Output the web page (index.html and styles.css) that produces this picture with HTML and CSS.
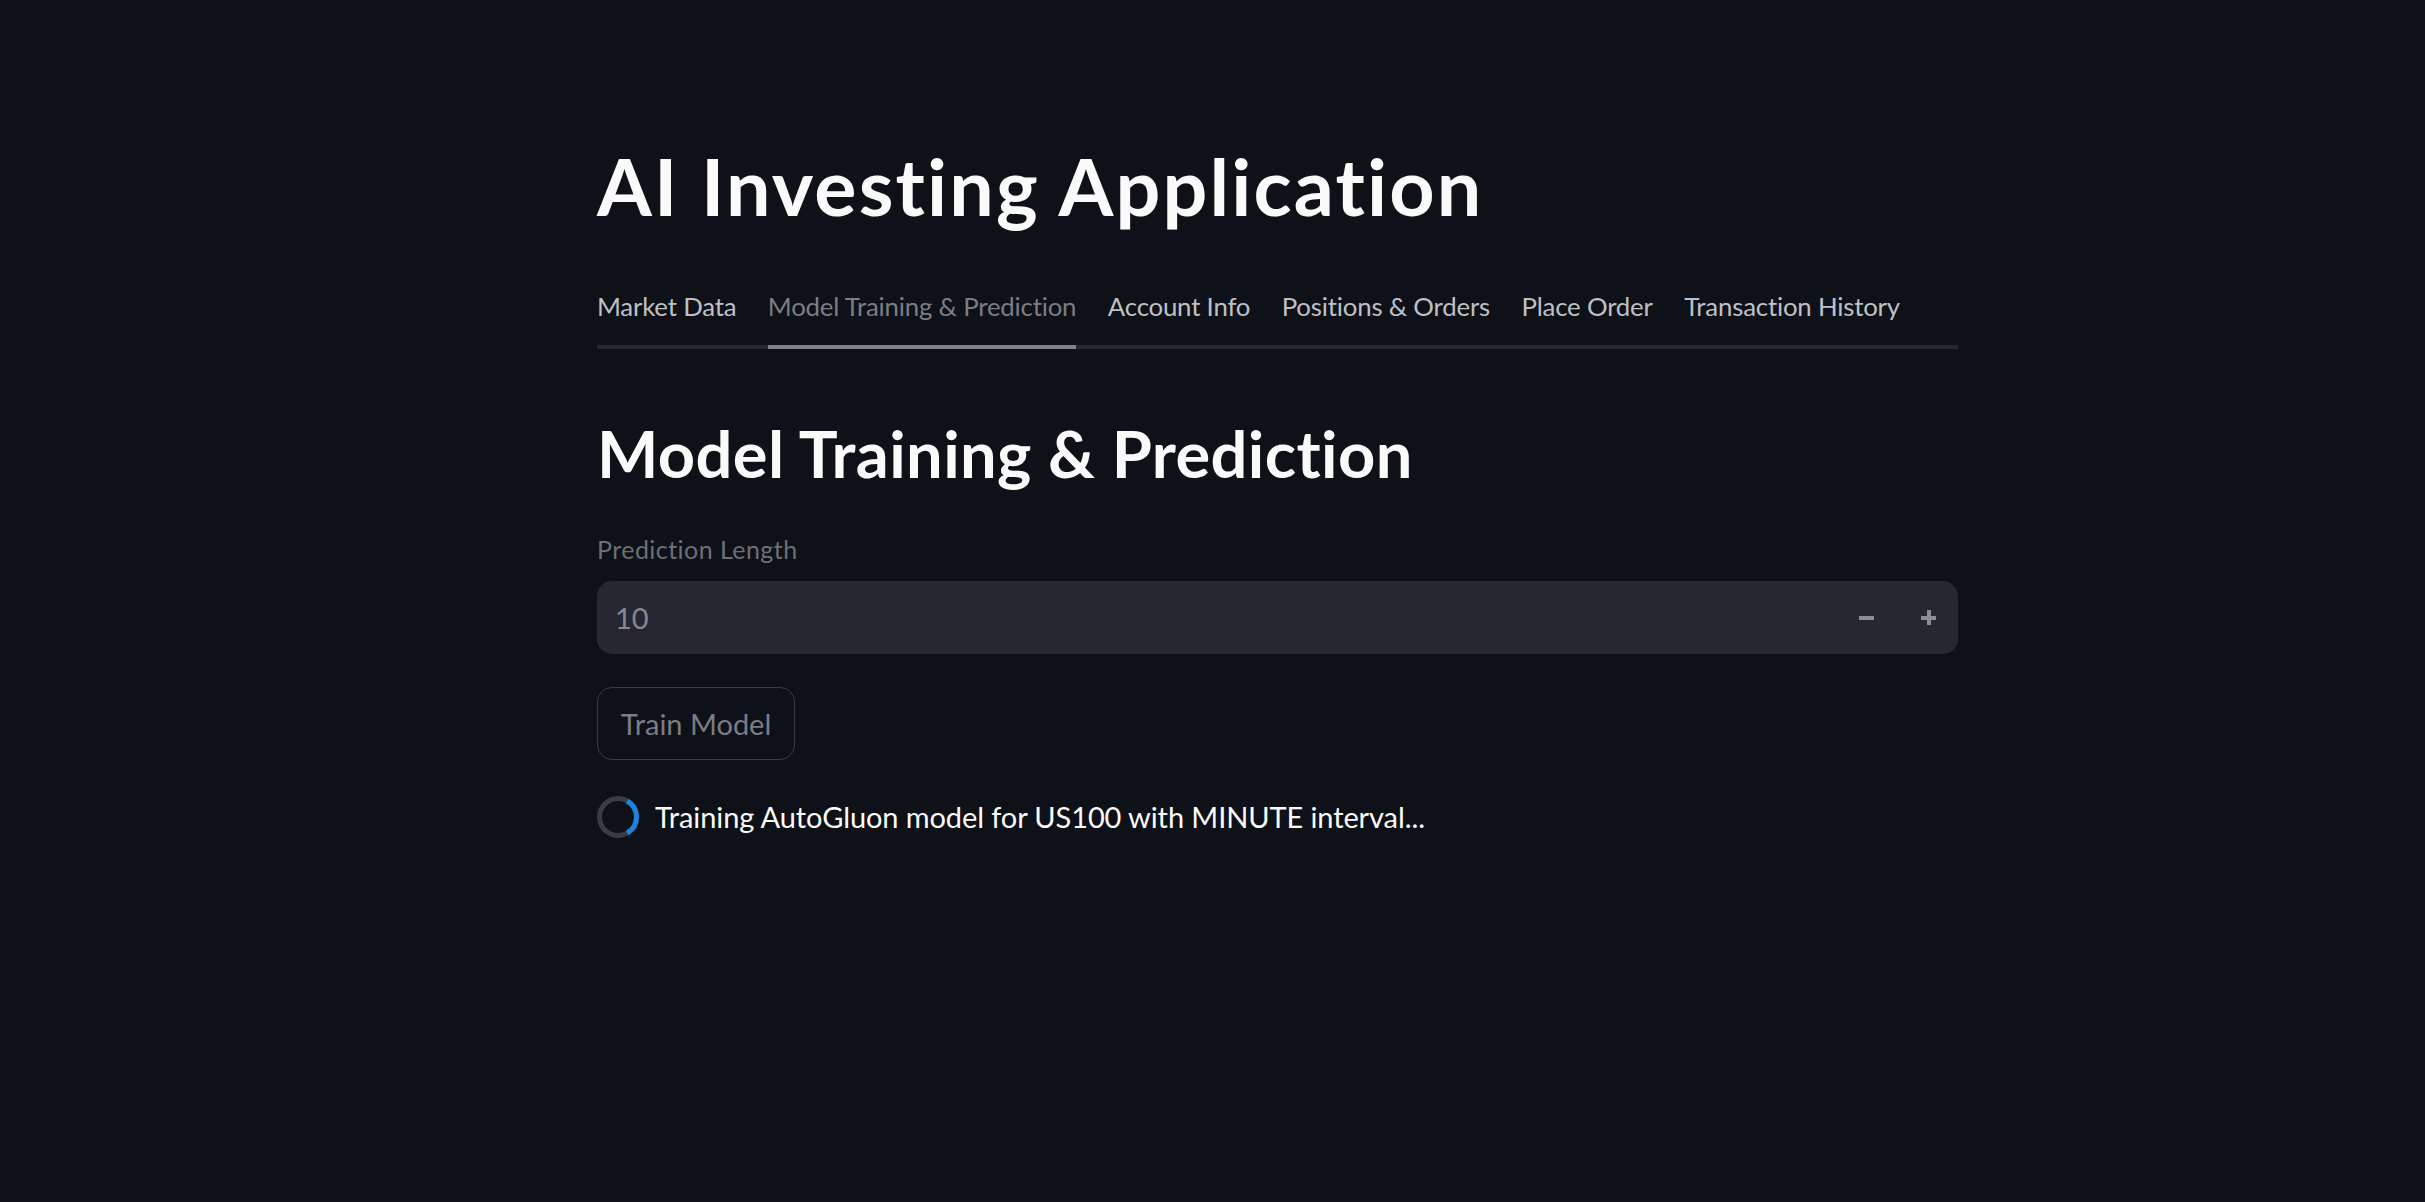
FILE: index.html
```html
<!DOCTYPE html>
<html lang="en">
<head>
<meta charset="utf-8">
<title>AI Investing Application</title>
<link rel="stylesheet" href="styles.css">
</head>
<body>
<main class="app">
  <div class="block">
    <h1 class="title">AI Investing Application</h1>
    <nav class="tabs">
      <div class="tab">Market Data</div>
      <div class="tab tab-active">Model Training &amp; Prediction</div>
      <div class="tab">Account Info</div>
      <div class="tab">Positions &amp; Orders</div>
      <div class="tab">Place Order</div>
      <div class="tab">Transaction History</div>
    </nav>
    <h2 class="heading">Model Training &amp; Prediction</h2>
    <label class="field-label">Prediction Length</label>
    <div class="number-input">
      <span class="number-value">10</span>
      <div class="steppers">
        <span class="step step-minus"></span>
        <span class="step step-plus"></span>
      </div>
    </div>
    <button class="btn">Train Model</button>
    <div class="status">
      <svg class="spinner" width="42" height="42" viewBox="0 0 42 42">
        <circle cx="21" cy="21" r="18.5" fill="none" stroke="#3a3c44" stroke-width="5"/>
        <path d="M 30.25 4.98 A 18.5 18.5 0 0 1 30.25 37.02" fill="none" stroke="#1c83e1" stroke-width="5"/>
      </svg>
      <span class="status-text">Training AutoGluon model for US100 with MINUTE interval...</span>
    </div>
  </div>
</main>
</body>
</html>
```

FILE: styles.css
```css
html, body {
  margin: 0;
  padding: 0;
  background: #0e1117;
}
body {
  font-family: Lato, "Noto Sans", sans-serif;
  font-variant-ligatures: none;
  font-feature-settings: "liga" 0, "dlig" 0;
  color: #fafafa;
  min-height: 1202px;
}
.app {
  padding-left: 597px;
}
.block {
  width: 1361px;
  display: flex;
  flex-direction: column;
  align-items: flex-start;
}
.title {
  margin: 139px 0 0 0;
  font-size: 79px;
  line-height: 1.2;
  font-weight: 700;
  letter-spacing: 2.15px;
  color: #fafafa;
}
.tabs {
  align-self: stretch;
  display: flex;
  gap: 31.5px;
  margin-top: 57px;
  border-bottom: 4px solid #262730;
}
.tab {
  font-size: 25.8px;
  line-height: 1.2;
  letter-spacing: -0.2px;
  color: #bfc0c5;
  padding-bottom: 23.2px;
  margin-bottom: -4px;
  border-bottom: 4px solid transparent;
  white-space: nowrap;
}
.tab-active {
  color: #7b7d85;
  border-bottom-color: #808289;
}
.heading {
  margin: 65.5px 0 0 0;
  font-size: 65px;
  line-height: 1.2;
  font-weight: 700;
  letter-spacing: 0.4px;
  color: #fafafa;
}
.field-label {
  margin-top: 42px;
  font-size: 25px;
  line-height: 1.2;
  letter-spacing: 0.45px;
  color: #6d6f77;
}
.number-input {
  align-self: stretch;
  margin-top: 17px;
  height: 73px;
  background: #262730;
  border-radius: 15px;
  display: flex;
  align-items: center;
  justify-content: space-between;
  padding: 0 22px 0 18px;
  box-sizing: border-box;
}
.number-value {
  font-size: 29px;
  line-height: 1.2;
  color: #86888f;
}
.steppers {
  display: flex;
  align-items: center;
  gap: 47px;
}
.step {
  position: relative;
  width: 15px;
  height: 15px;
  display: block;
}
.step::before {
  content: "";
  position: absolute;
  left: 0;
  top: 6px;
  width: 15px;
  height: 4px;
  background: #8b8d95;
}
.step-plus::after {
  content: "";
  position: absolute;
  left: 5.5px;
  top: 0;
  width: 4px;
  height: 15px;
  background: #8b8d95;
}
.btn {
  margin-top: 33px;
  height: 73px;
  width: 198px;
  padding: 0;
  background: transparent;
  border: 1px solid #3b3c44;
  border-radius: 15px;
  font-family: Lato, "Noto Sans", sans-serif;
  font-variant-ligatures: none;
  font-size: 29px;
  line-height: 1.2;
  color: #7b7d85;
}
.status {
  margin-top: 36px;
  display: flex;
  align-items: center;
  gap: 16px;
}
.spinner {
  display: block;
  flex: none;
}
.status-text {
  font-size: 29px;
  line-height: 1.2;
  letter-spacing: -0.1px;
  color: #fafafa;
}
```
